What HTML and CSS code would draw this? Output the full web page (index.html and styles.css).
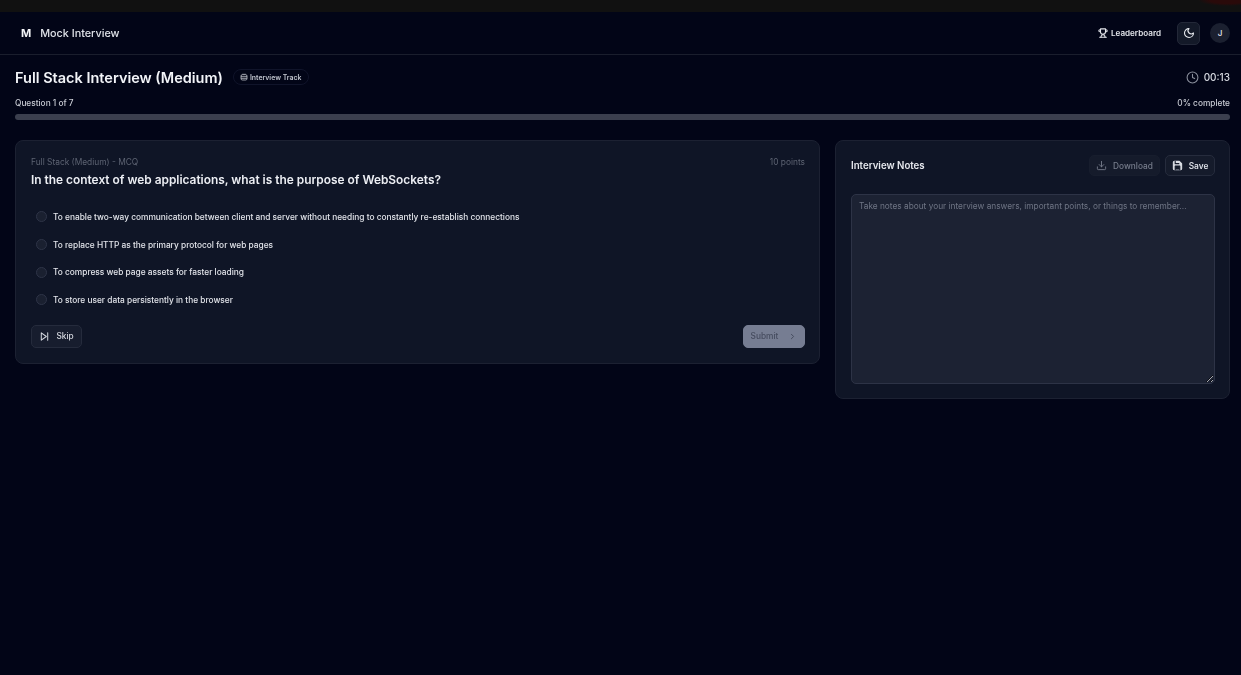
FILE: index.html
```html
<!DOCTYPE html>
<html lang="en">
<head>
<meta charset="utf-8">
<title>Mock Interview</title>
<link rel="stylesheet" href="styles.css">
</head>
<body>
<div class="strip"></div>
<header class="nav">
  <div class="brand"><span class="logo">M</span><span class="brand-name">Mock Interview</span></div>
  <div class="nav-right">
    <a class="lead">
      <svg class="ic10" viewBox="0 0 24 24" fill="none" stroke="currentColor" stroke-width="2.6" stroke-linecap="round" stroke-linejoin="round"><path d="M6 9H4.5a2.5 2.5 0 0 1 0-5H6"/><path d="M18 9h1.5a2.5 2.5 0 0 0 0-5H18"/><path d="M4 22h16"/><path d="M10 14.66V17c0 .55-.47.98-.97 1.21C7.85 18.75 7 20.24 7 22"/><path d="M14 14.66V17c0 .55.47.98.97 1.21C16.15 18.75 17 20.24 17 22"/><path d="M18 2H6v7a6 6 0 0 0 12 0V2Z"/></svg>
      Leaderboard
    </a>
    <button class="theme"><svg class="ic12" viewBox="0 0 24 24" fill="none" stroke="currentColor" stroke-width="2.2" stroke-linecap="round" stroke-linejoin="round"><path d="M12 3a6 6 0 0 0 9 9 9 9 0 1 1-9-9Z"/></svg></button>
    <span class="avatar">J</span>
  </div>
</header>
<main class="main">
  <div class="title-row">
    <div class="title-left">
      <h1>Full Stack Interview (Medium)</h1>
      <span class="badge"><svg class="ic8" viewBox="0 0 24 24" fill="none" stroke="currentColor" stroke-width="2.4"><rect x="3" y="5" width="18" height="16" rx="4"/><path d="M3 11h18M3 16h18M9 2v3M15 2v3"/></svg>Interview Track</span>
    </div>
    <div class="timer"><svg class="ic13" viewBox="0 0 24 24" fill="none" stroke="currentColor" stroke-width="2" stroke-linecap="round" stroke-linejoin="round"><circle cx="12" cy="12" r="10"/><path d="M12 6v6l4 2"/></svg>00:13</div>
  </div>
  <div class="progress-labels"><span>Question 1 of 7</span><span>0% complete</span></div>
  <div class="progress"></div>
  <div class="columns">
    <section class="card question">
      <div class="q-head"><span>Full Stack (Medium) - MCQ</span><span>10 points</span></div>
      <h2>In the context of web applications, what is the purpose of WebSockets?</h2>
      <ul class="options">
        <li><span class="radio"></span>To enable two-way communication between client and server without needing to constantly re-establish connections</li>
        <li><span class="radio"></span>To replace HTTP as the primary protocol for web pages</li>
        <li><span class="radio"></span>To compress web page assets for faster loading</li>
        <li><span class="radio"></span>To store user data persistently in the browser</li>
      </ul>
      <div class="q-actions">
        <button class="btn skip"><svg class="ic11" viewBox="0 0 24 24" fill="none" stroke="currentColor" stroke-width="2.2" stroke-linecap="round" stroke-linejoin="round"><path d="M5 4l11 8-11 8z"/><path d="M19 4v16"/></svg>Skip</button>
        <button class="btn submit">Submit<svg class="ic9" viewBox="0 0 24 24" fill="none" stroke="currentColor" stroke-width="2.6" stroke-linecap="round" stroke-linejoin="round"><path d="M9 6l6 6-6 6"/></svg></button>
      </div>
    </section>
    <aside class="card notes">
      <div class="n-head">
        <h3>Interview Notes</h3>
        <div class="n-actions">
          <button class="btn download"><svg class="ic11" viewBox="0 0 24 24" fill="none" stroke="currentColor" stroke-width="2" stroke-linecap="round" stroke-linejoin="round"><path d="M21 15v4a2 2 0 0 1-2 2H5a2 2 0 0 1-2-2v-4"/><path d="M7 10l5 5 5-5"/><path d="M12 15V3"/></svg>Download</button>
          <button class="btn save"><svg class="ic11" viewBox="0 0 24 24" fill="currentColor" stroke="currentColor" stroke-width="2.4" stroke-linecap="round" stroke-linejoin="round"><path d="M19 21H5a2 2 0 0 1-2-2V5a2 2 0 0 1 2-2h11l5 5v11a2 2 0 0 1-2 2z"/><path d="M17 21v-8H7v8" stroke="#151b2b" fill="#151b2b"/><path d="M7 3v5h8" stroke="#151b2b" fill="none"/></svg>Save</button>
        </div>
      </div>
      <textarea class="notes-area" placeholder="Take notes about your interview answers, important points, or things to remember..."></textarea>
    </aside>
  </div>
</main>
</body>
</html>
```

FILE: styles.css
```css
* { box-sizing: border-box; }
html, body { margin: 0; height: 100%; }
body {
  background: #020517;
  color: #f1f3f7;
  font-family: Inter, "Liberation Sans", sans-serif;
  overflow: hidden;
}
.strip {
  height: 12px;
  background: radial-gradient(ellipse 30px 6px at 1228px 0, #2a0a0a 60%, transparent 100%), #111111;
}
.nav {
  height: 43px;
  display: flex;
  align-items: center;
  justify-content: space-between;
  padding: 0 11px 0 21px;
  border-bottom: 1px solid #1a1e2d;
  filter: blur(0.3px);
}
.brand { display: flex; align-items: center; gap: 9px; }
.logo { font-size: 11px; font-weight: 700; color: #f4f5f8; }
.brand-name { font-size: 10.8px; font-weight: 500; color: #dfe2e8; }
.nav-right { display: flex; align-items: center; }
.lead { display: flex; align-items: center; gap: 3px; font-size: 8.1px; font-weight: 600; color: #e4e6eb; margin-right: 16px; }
.ic8 { width: 8px; height: 8px; flex: none; }
.ic9 { width: 9px; height: 9px; flex: none; }
.ic10 { width: 10px; height: 10px; flex: none; }
.ic11 { width: 11px; height: 11px; flex: none; }
.ic12 { width: 12px; height: 12px; flex: none; }
.ic13 { width: 13px; height: 13px; flex: none; }
.theme {
  width: 23px; height: 23px; padding: 0;
  display: flex; align-items: center; justify-content: center;
  background: #131928; border: 1px solid #232838; border-radius: 5px;
  color: #e8eaef; margin-right: 10px;
}
.avatar {
  width: 20px; height: 20px; border-radius: 50%;
  background: #1b2030; color: #d5d8df;
  display: flex; align-items: center; justify-content: center;
  font-size: 8px; font-weight: 600;
}
.main { padding: 0 11px 0 15px; filter: blur(0.3px); }
.title-row { height: 38px; padding-top: 6px; display: flex; align-items: center; justify-content: space-between; }
.title-left { display: flex; align-items: center; gap: 10px; }
h1 { margin: 0; font-size: 14.5px; font-weight: 600; color: #f2f4f8; }
.badge {
  display: flex; align-items: center; gap: 2px;
  height: 16px; padding: 0 7px 0 6px;
  border: 1px solid #10142a; border-radius: 8px;
  font-size: 6.9px; font-weight: 600; color: #bfc3cc;
}
.timer { display: flex; align-items: center; gap: 5px; font-size: 10px; font-weight: 500; color: #d9dce3; }
.timer svg { color: #8a8f9c; }
.progress-labels { display: flex; justify-content: space-between; font-size: 8.3px; font-weight: 500; color: #c9ccd4; line-height: 12px; margin-top: 4px; }
.progress { height: 6px; margin-top: 5px; background: #3b3f4e; border-radius: 3px; }
.columns { display: flex; align-items: flex-start; gap: 15px; margin-top: 20px; }
.card { background: #0f1526; border: 1px solid #1c2132; border-radius: 8px; }
.question { width: 805px; height: 224px; padding: 15px 14px 15px 15px; }
.q-head { display: flex; justify-content: space-between; font-size: 8.4px; color: #5d6372; line-height: 12px; }
h2 { margin: 4px 0 0; font-size: 11.9px; font-weight: 600; line-height: 16px; color: #eceef3; }
.options { list-style: none; margin: 15px 0 0; padding: 0 0 0 5px; }
.options li { display: flex; align-items: center; gap: 6px; height: 27.7px; font-size: 8.33px; font-weight: 500; color: #e2e4ea; }
.radio { width: 11px; height: 11px; border-radius: 50%; background: #1a2030; border: 1px solid #2e3447; flex: none; }
.q-actions { display: flex; justify-content: space-between; align-items: center; margin-top: 11px; }
.btn { display: flex; align-items: center; font-family: inherit; font-size: 8.3px; font-weight: 500; border-radius: 5px; padding: 0; height: 23px; }
.skip { width: 51px; gap: 6px; justify-content: center; background: #171d2e; border: 1px solid #252b3c; color: #d5d8df; }
.submit { width: 62px; gap: 10px; justify-content: center; background: #767d92; border: 1px solid #767d92; color: #454b5e; }
.notes { width: 395px; height: 259px; padding: 14px 14px 14px 15px; }
.n-head { display: flex; justify-content: space-between; align-items: center; height: 21px; }
h3 { margin: 0; font-size: 9.7px; font-weight: 600; color: #e6e8ee; }
.n-actions { display: flex; gap: 5px; }
.download { width: 71px; height: 21px; gap: 6px; justify-content: center; background: #151b2b; border: 1px solid #171d2d; color: #767c8b; }
.save { width: 50px; height: 21px; gap: 6px; justify-content: center; background: #151b2b; border: 1px solid #262c3d; color: #dcdfe6; font-weight: 600; }
.notes-area {
  display: block; width: 100%; height: 190px; margin-top: 18px;
  background: #1c2233; border: 1px solid #2d3346; border-radius: 5px;
  padding: 6px 7px; font-family: inherit; font-size: 8.3px; color: #d8dbe2; outline: none;
}
.notes-area::placeholder { color: #6f7585; opacity: 1; }
```
